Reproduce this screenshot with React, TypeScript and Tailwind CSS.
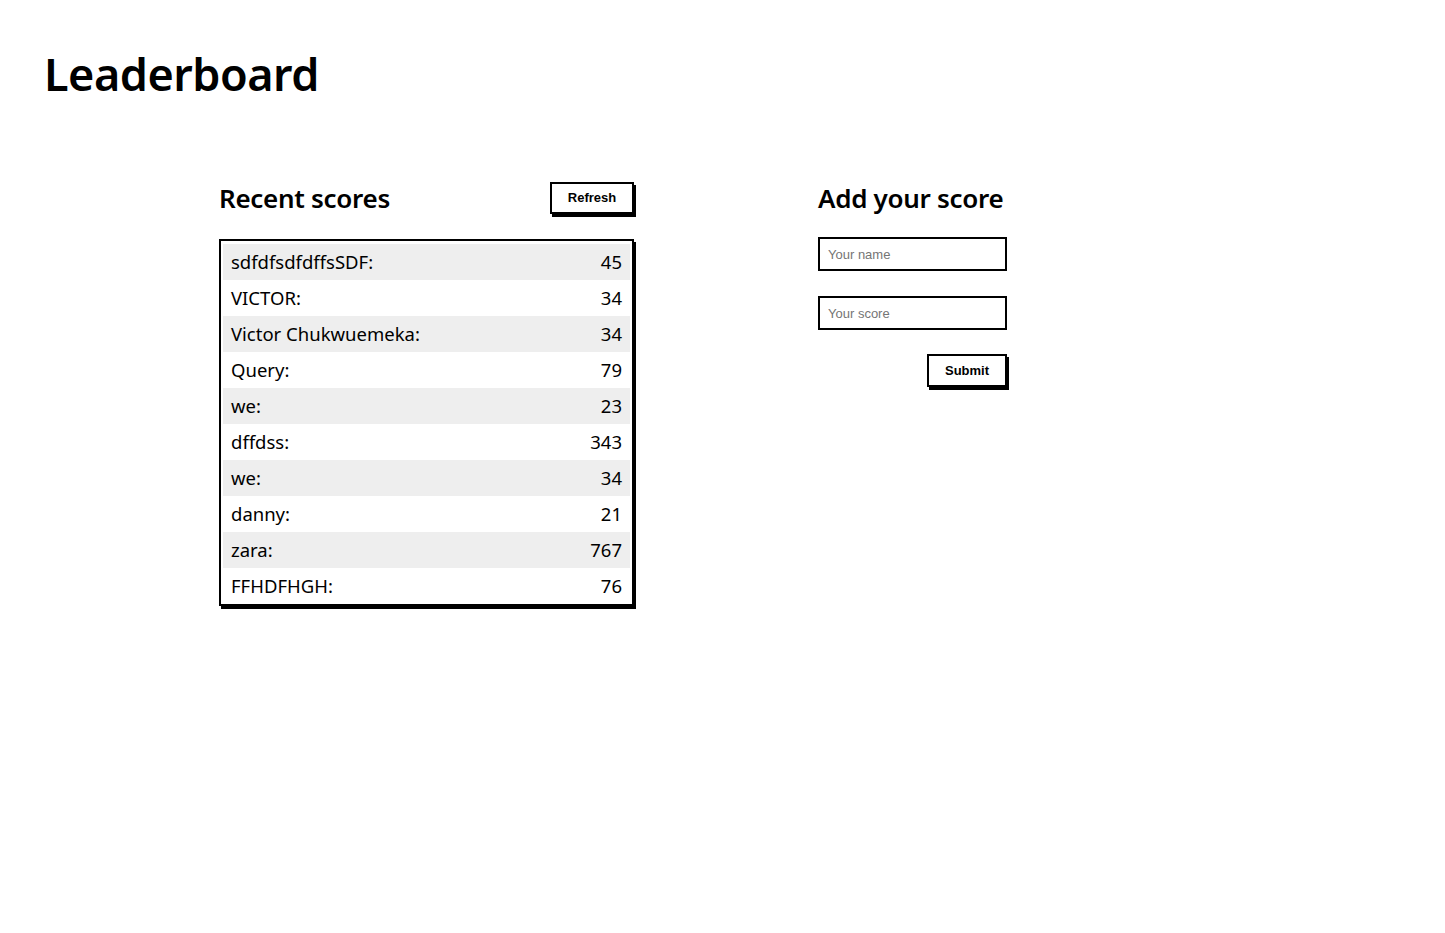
const scores = [
  { name: "sdfdfsdfdffsSDF", score: 45 },
  { name: "VICTOR", score: 34 },
  { name: "Victor Chukwuemeka", score: 34 },
  { name: "Query", score: 79 },
  { name: "we", score: 23 },
  { name: "dffdss", score: 343 },
  { name: "we", score: 34 },
  { name: "danny", score: 21 },
  { name: "zara", score: 767 },
  { name: "FFHDFHGH", score: 76 },
];

const heading = "font-['Noto_Sans',sans-serif] text-black";
const btn =
  "bg-white border-2 border-black shadow-[2px_3px_0_#000] font-['Liberation_Sans',Arial,sans-serif] font-bold text-[13px] text-black";
const field =
  "w-[189px] h-[34px] border-2 border-black px-[8px] font-['Liberation_Sans',Arial,sans-serif] text-[13px] placeholder:text-[#757575] outline-none";

export default function App() {
  return (
    <div className="min-h-screen bg-white px-[44px] pt-[44px]">
      <h1 className={`${heading} text-[45px] leading-[60px] font-semibold tracking-[-0.5px]`}>Leaderboard</h1>

      <div className="flex pl-[175px] pt-[76px]">
        <section className="w-[415px]">
          <div className="flex items-center justify-between h-[36px]">
            <h2 className={`${heading} text-[26px] font-semibold tracking-[-0.3px]`}>Recent scores</h2>
            <button className={`${btn} w-[84px] h-[32px]`}>Refresh</button>
          </div>
          <ul className="mt-[23px] w-[415px] border-2 border-black shadow-[2px_3px_0_#000] px-[2px] pt-[3px]">
            {scores.map((s, i) => (
              <li
                key={i}
                className={`flex justify-between items-center h-[36px] px-2 text-[18.5px] ${heading} ${
                  i % 2 === 0 ? "bg-[#eeeeee]" : "bg-white"
                }`}
              >
                <span>{s.name}:</span>
                <span>{s.score}</span>
              </li>
            ))}
          </ul>
        </section>

        <section className="ml-[184px] w-[191px]">
          <div className="flex items-center h-[36px]">
            <h2 className={`${heading} text-[26px] font-semibold tracking-[-0.3px] whitespace-nowrap`}>Add your score</h2>
          </div>
          <form className="flex flex-col mt-[21px]" onSubmit={(e) => e.preventDefault()}>
            <input placeholder="Your name" className={field} />
            <input placeholder="Your score" className={`${field} mt-[25px]`} />
            <div className="flex justify-end w-[189px] mt-[24px]">
              <button type="submit" className={`${btn} w-[80px] h-[33px]`}>Submit</button>
            </div>
          </form>
        </section>
      </div>
    </div>
  );
}
